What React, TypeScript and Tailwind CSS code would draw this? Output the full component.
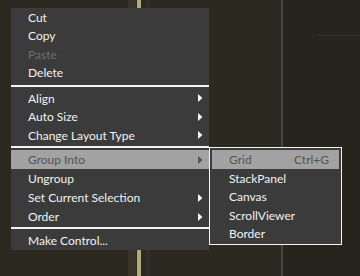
import { ReactNode } from "react";

type Item = { label: string; sub?: boolean; disabled?: boolean; active?: boolean };

const sections: { items: Item[]; row: string; sep: string }[] = [
  {
    row: "h-[18.5px]",
    sep: "mt-[3px] mb-[2px]",
    items: [{ label: "Cut" }, { label: "Copy" }, { label: "Paste", disabled: true }, { label: "Delete" }],
  },
  {
    row: "h-[18.5px]",
    sep: "mt-[1.5px] mb-[2px]",
    items: [
      { label: "Align", sub: true },
      { label: "Auto Size", sub: true },
      { label: "Change Layout Type", sub: true },
    ],
  },
  {
    row: "h-[19px]",
    sep: "mt-[1px] mb-[2px]",
    items: [
      { label: "Group Into", sub: true, active: true },
      { label: "Ungroup" },
      { label: "Set Current Selection", sub: true },
      { label: "Order", sub: true },
    ],
  },
  { row: "h-[19px]", sep: "", items: [{ label: "Make Control..." }] },
];

function Arrow({ dark }: { dark?: boolean }) {
  return (
    <svg width="5" height="8" viewBox="0 0 5 8">
      <path d="M0 0 L4.5 4 L0 8 Z" fill={dark ? "#555555" : "#f4f4f4"} />
    </svg>
  );
}

function Row({ item, row }: { item: Item; row: string }) {
  const color = item.active ? "bg-[#a2a2a2] text-[#555555]" : item.disabled ? "text-[#6e6e6e]" : "text-[#f2f2f2]";
  return (
    <div className={`flex items-center justify-between pl-[17px] pr-[6px] ${row} ${color}`}>
      <span className="pt-px">{item.label}</span>
      {item.sub && <Arrow dark={item.active} />}
    </div>
  );
}

function SubRow({ children, active, shortcut }: { children: ReactNode; active?: boolean; shortcut?: string }) {
  return (
    <div
      className={`flex items-center pl-[17px] ${active ? "h-[19px] bg-[#a2a2a2] text-[#555555]" : "h-[18.5px] text-[#f2f2f2]"}`}
    >
      <span className="w-[65px] pt-px">{children}</span>
      {shortcut && <span className="pt-px">{shortcut}</span>}
    </div>
  );
}

export default function App() {
  return (
    <div
      className="relative h-[276px] w-[360px] overflow-hidden bg-[#2c2920] text-[12px] leading-none"
      style={{ fontFamily: 'Lato, "Open Sans", sans-serif' }}
    >
      {/* canvas behind the menu */}
      <div className="absolute inset-0 flex">
        <div className="w-[128px]" />
        <div className="w-[8px] bg-[#35332a]" />
        <div className="w-px" />
        <div className="w-[4px] bg-[#abad7c]" />
        <div className="w-[5px]" />
        <div className="w-[4px] bg-[#312f27]" />
        <div className="w-[131px]" />
        <div className="w-[2px] bg-[#48463f]" />
        <div className="flex-1 bg-[#27241e] pt-[35px] pl-[35px]">
          <div className="h-px bg-[#37342d]" />
        </div>
      </div>

      {/* context menu */}
      <div className="absolute left-[11px] top-[8px] w-[198px] bg-[#3b3b3b]">
        {sections.map((s, i) => (
          <div key={i}>
            {s.items.map((it) => (
              <Row key={it.label} item={it} row={s.row} />
            ))}
            {s.sep && <div className={`h-[2px] bg-[#f4f4f4] ${s.sep}`} />}
          </div>
        ))}
      </div>

      {/* submenu */}
      <div className="absolute left-[209px] top-[147px] h-[98px] w-[133px] border border-[#f4f4f4] bg-[#3b3b3b] p-[2px]">
        <SubRow active shortcut="Ctrl+G">
          Grid
        </SubRow>
        <SubRow>StackPanel</SubRow>
        <SubRow>Canvas</SubRow>
        <SubRow>ScrollViewer</SubRow>
        <SubRow>Border</SubRow>
      </div>
    </div>
  );
}
